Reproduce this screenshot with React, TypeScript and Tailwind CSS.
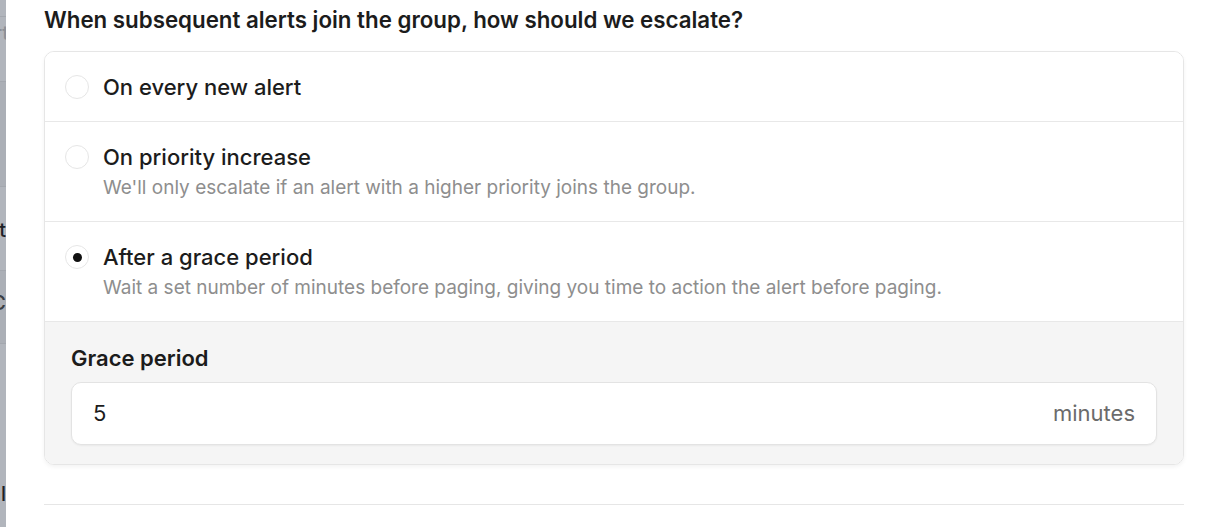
import { useState } from 'react';

type Option = {
  id: string;
  title: string;
  description?: string;
};

const options: Option[] = [
  { id: 'every', title: 'On every new alert' },
  {
    id: 'priority',
    title: 'On priority increase',
    description: "We'll only escalate if an alert with a higher priority joins the group.",
  },
  {
    id: 'grace',
    title: 'After a grace period',
    description: 'Wait a set number of minutes before paging, giving you time to action the alert before paging.',
  },
];

// Dimmed page peeking out behind the drawer
const BackdropStrip = () => (
  <div className="w-[6px] shrink-0 overflow-hidden bg-[#b1b5bc] relative">
    <div className="w-[40px] -ml-[34px] flex flex-col text-right text-[20px] font-medium">
      <div className="h-[17px] border-b border-[#a3a7ae]" />
      <div className="h-[32px] leading-[32px] text-[#8c9097]">alert</div>
      <div className="h-[33px] border-b border-[#a3a7ae]" />
      <div className="h-[105px] bg-[#abafb6] border-b border-[#a3a7ae]" />
      <div className="h-[84px] leading-[86px] text-[#1f2126] border-b border-[#a3a7ae]">st</div>
      <div className="h-[73px] leading-[64px] bg-[#abafb6] text-[#3b3e44] border-b border-[#a3a7ae]">C</div>
      <div className="h-[130px]" />
      <div className="h-[40px] leading-[40px] text-[#1f2126]">nal</div>
    </div>
  </div>
);

const Radio = ({ checked }: { checked: boolean }) => (
  <span className="mt-[4px] w-[24px] h-[24px] shrink-0 rounded-full border border-[#e6e6e6] bg-white flex items-center justify-center">
    {checked && <span className="w-[9px] h-[9px] rounded-full bg-[#111111]" />}
  </span>
);

export default function App() {
  const [selected, setSelected] = useState('grace');
  const [minutes, setMinutes] = useState('5');

  return (
    <div className="flex w-[1218px] h-[527px] bg-white overflow-hidden font-['Inter',sans-serif] text-[#1c1c1c]">
      <BackdropStrip />

      <div className="flex-1 pl-[38px] pr-[34px] pt-[6px]">
        <h2 className="text-[22.3px] leading-[28px] font-semibold mb-[17px]">
          When subsequent alerts join the group, how should we escalate?
        </h2>

        <div className="rounded-[10px] border border-[#e6e6e6] shadow-[0_2px_4px_rgba(0,0,0,0.05)] overflow-hidden">
          {options.map((opt, i) => (
            <label
              key={opt.id}
              onClick={() => setSelected(opt.id)}
              className={`flex items-start gap-[14px] px-[20px] pt-[19px] pb-[18px] bg-white cursor-pointer ${
                i > 0 ? 'border-t border-[#e8e8e8]' : ''
              }`}
            >
              <Radio checked={selected === opt.id} />
              <div className="flex flex-col">
                <span className="text-[22px] leading-[32px] font-medium">{opt.title}</span>
                {opt.description && (
                  <span className="text-[19px] leading-[30px] text-[#8e8e8e]">{opt.description}</span>
                )}
              </div>
            </label>
          ))}

          {selected === 'grace' && (
            <div className="bg-[#f5f5f5] border-t border-[#e8e8e8] px-[26px] pt-[22px] pb-[19px]">
              <div className="text-[22px] leading-[28px] font-semibold mb-[10px]">Grace period</div>
              <div className="h-[63px] flex items-center rounded-[10px] border border-[#e3e3e3] bg-white px-[21px] shadow-[0_1px_2px_rgba(0,0,0,0.05)]">
                <input
                  value={minutes}
                  onChange={(e) => setMinutes(e.target.value)}
                  className="flex-1 text-[22px] outline-none bg-transparent text-[#1c1c1c]"
                />
                <span className="text-[22px] text-[#6b6b6b]">minutes</span>
              </div>
            </div>
          )}
        </div>

        <div className="mt-[39px] border-t border-[#e6e6e6]" />
      </div>
    </div>
  );
}
